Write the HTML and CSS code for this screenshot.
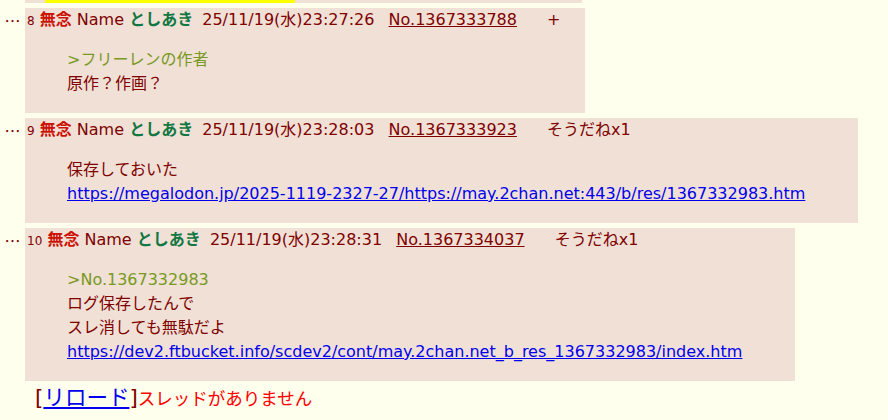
FILE: index.html
```html
<!DOCTYPE html>
<html lang="ja">
  <head>
    <meta charset="UTF-8" />
    <meta name="viewport" content="width=device-width, initial-scale=1.0" />
    <title>二次元裏＠ふたば</title>
    <link rel="stylesheet" href="styles.css">
  </head>
  <body>
    <div class="thread">
      <!-- tail of the previous reply -->
      <div class="reply tail">
        <div class="rts"></div>
        <div class="rtd"><div class="mark"></div></div>
      </div>

      <div class="reply">
        <div class="rts">…</div>
        <div class="rtd">
          <div class="head">
            <span class="rsc">8</span>
            <span class="csb">無念</span>
            <span class="nm">Name</span>
            <span class="cnm">としあき</span>
            <span class="cnw">25/11/19(水)23:27:26</span>
            <a class="cno" href="#">No.1367333788</a>
            <a class="sod plus" href="#">+</a>
          </div>
          <blockquote>
            <span class="qt">&gt;フリーレンの作者</span><br>
            原作？作画？
          </blockquote>
        </div>
      </div>

      <div class="reply">
        <div class="rts">…</div>
        <div class="rtd">
          <div class="head">
            <span class="rsc">9</span>
            <span class="csb">無念</span>
            <span class="nm">Name</span>
            <span class="cnm">としあき</span>
            <span class="cnw">25/11/19(水)23:28:03</span>
            <a class="cno" href="#">No.1367333923</a>
            <a class="sod" href="#">そうだねx1</a>
          </div>
          <blockquote>
            保存しておいた<br>
            <a class="url" href="#">https://megalodon.jp/2025-1119-2327-27/https://may.2chan.net:443/b/res/1367332983.htm</a>
          </blockquote>
        </div>
      </div>

      <div class="reply">
        <div class="rts">…</div>
        <div class="rtd">
          <div class="head">
            <span class="rsc">10</span>
            <span class="csb">無念</span>
            <span class="nm">Name</span>
            <span class="cnm">としあき</span>
            <span class="cnw">25/11/19(水)23:28:31</span>
            <a class="cno" href="#">No.1367334037</a>
            <a class="sod" href="#">そうだねx1</a>
          </div>
          <blockquote>
            <span class="qt">&gt;No.1367332983</span><br>
            ログ保存したんで<br>
            スレ消しても無駄だよ<br>
            <a class="url" href="#">https://dev2.ftbucket.info/scdev2/cont/may.2chan.net_b_res_1367332983/index.htm</a>
          </blockquote>
        </div>
      </div>
    </div>

    <div class="reload">
      <span class="brk">[<a href="#">リロード</a>]</span><span class="gone">スレッドがありません</span>
    </div>
  </body>
</html>
```

FILE: styles.css
```css
body {
  margin: 0;
  background-color: #ffffee;
  color: #800000;
  font-family: "DejaVu Sans", "Noto Sans CJK JP", sans-serif;
  font-size: 16px;
  line-height: 24px;
}

/* Replies */
.reply {
  display: flex;
  align-items: flex-start;
  margin-top: 5px;
}

.reply.tail {
  margin-top: 0;
}

.rts {
  width: 25px;
  flex: none;
  text-align: center;
  font-family: "Noto Sans CJK JP", sans-serif;
}

.rtd {
  background-color: #f0e0d6;
  padding: 0 8px 1px 2px;
}

.tail .rtd {
  width: 547px;
  height: 3px;
  padding: 0 8px 0 2px;
}

.mark {
  margin-left: 18px;
  width: 250px;
  height: 3px;
  background-color: #ffff00;
}

.head {
  white-space: nowrap;
  height: 24px;
}

.rsc {
  font-size: 12px;
  line-height: 1;
}

.csb {
  color: #cc1105;
  font-weight: bold;
}

.cnm {
  color: #117743;
  font-weight: bold;
  margin-left: 0;
}

.cnw {
  margin-left: 4px;
}

.cno {
  color: #800000;
  margin-left: 9px;
}

.sod {
  color: #800000;
  text-decoration: none;
  margin-left: 25px;
}

.plus {
  margin-right: 17px;
}

blockquote {
  margin: 16px 45px 16px 40px;
}

.qt {
  color: #789922;
}

.url {
  color: #0000ee;
}

/* Footer */
.reload {
  padding: 5px 0 0 35px;
  white-space: nowrap;
  line-height: 24px;
}

.brk {
  font-size: 21.5px;
}

.brk a {
  color: #0000ee;
}

.gone {
  color: #ff0000;
  font-size: 17.5px;
}
```
